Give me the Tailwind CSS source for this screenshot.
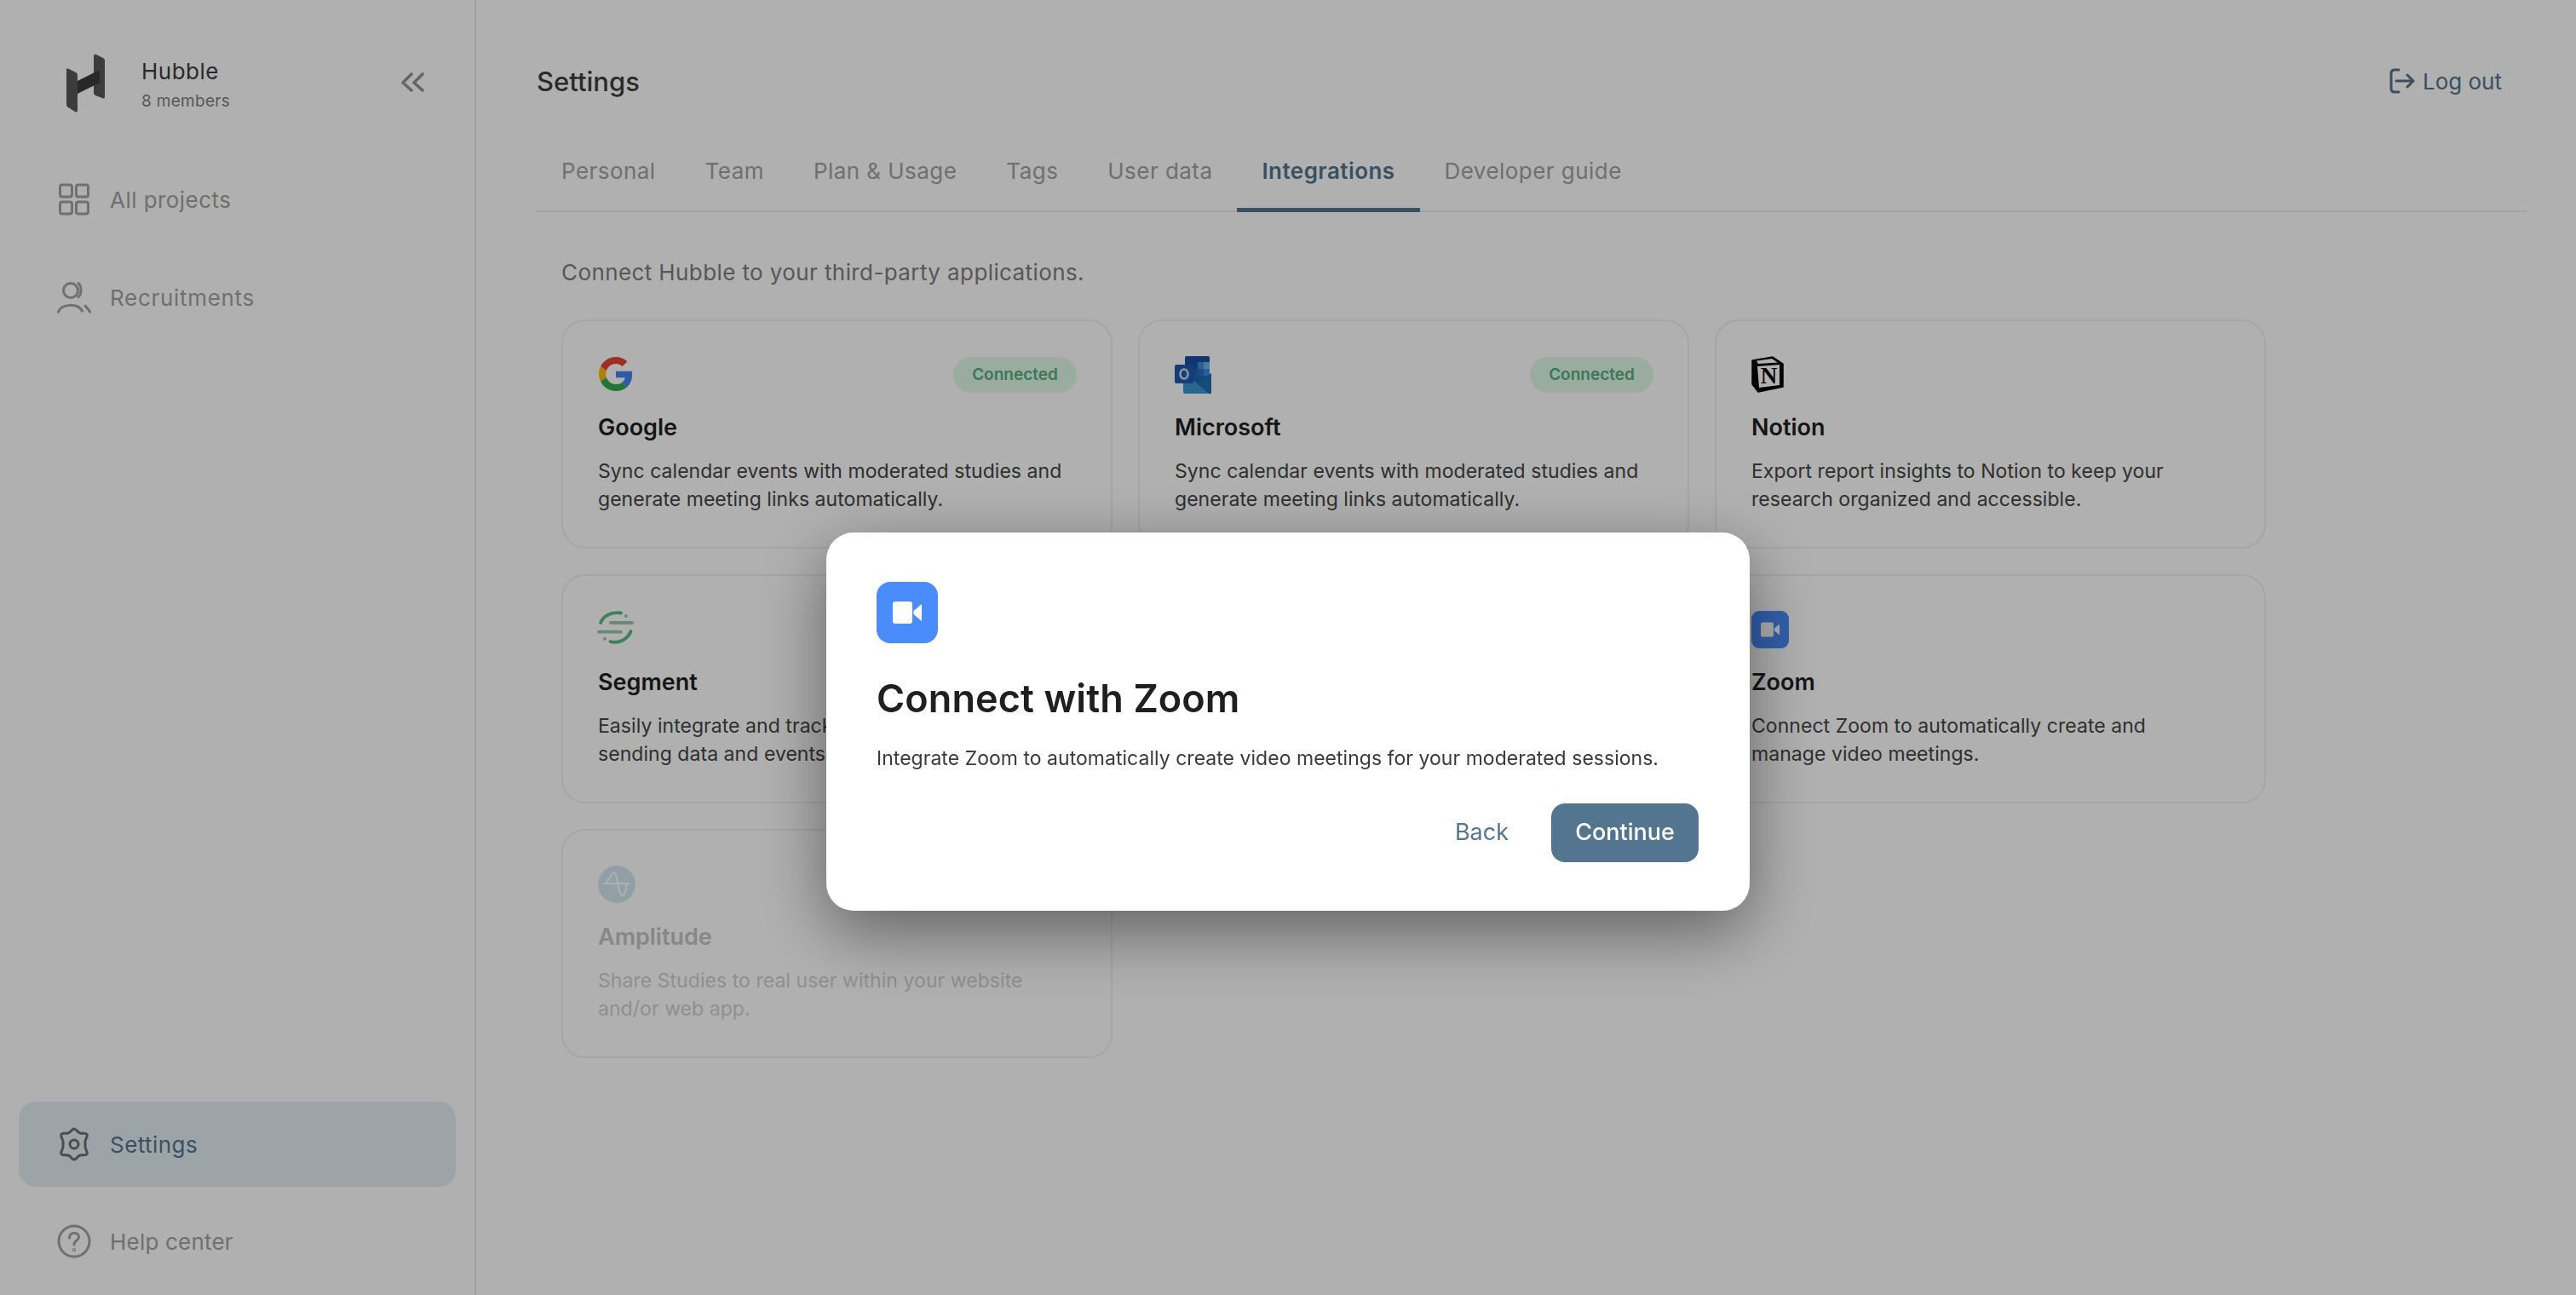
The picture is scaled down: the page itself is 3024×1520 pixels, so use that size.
<!DOCTYPE html>
<html lang="en">
<head>
  <meta charset="UTF-8" />
  <title>Hubble - Settings</title>
  <script src="https://cdn.jsdelivr.net/npm/@tailwindcss/browser@4"></script>
</head>
<body class="bg-white text-[#3f3f3f] h-screen overflow-hidden flex font-['Inter',sans-serif]">

  <!-- Sidebar -->
  <aside class="w-[559px] shrink-0 h-full border-r-2 border-[#e5e5e5] flex flex-col">
    <div class="flex items-center h-[195px] pl-[78px] pr-[59px]">
      <svg class="w-[45px] h-[69px] shrink-0" viewBox="78 63 45 69">
        <path fill="#585858" d="M78 82q0-3 3-1l8 4q2 1 2 3v41q0 4-3 2l-8-5q-2-1-2-3z" />
        <path fill="#585858" d="M110 66q0-3 3-2l8 4q2 1 2 3v43q0 3-3 1l-8-3q-2-1-2-3z" />
        <path fill="#3a3a3a" d="M91 95 117 82v15L91 110z" />
      </svg>
      <div class="ml-[43px] flex-1 pt-[3px]">
        <div class="text-[26px] leading-[34px] tracking-[0.5px] text-[#3d3d3d]">Hubble</div>
        <div class="text-[19px] leading-[26px] mt-[5px] tracking-[0.3px] text-[#7f7f7f]">8 members</div>
      </div>
      <svg class="w-[28px] h-[24px] mb-[2px]" viewBox="0 0 28 24" fill="none" stroke="#949494" stroke-width="3.6" stroke-linecap="round" stroke-linejoin="round">
        <path d="M13 2 3 12l10 9M26 2 16 12l10 9" />
      </svg>
    </div>

    <nav class="flex flex-col gap-[15px] px-[22px] mt-[-11px]">
      <a class="flex items-center gap-[22px] h-[100px] pl-[45px] text-[#a2a2a2] text-[26px] tracking-[0.45px]">
        <svg class="w-[40px] h-[40px] shrink-0" viewBox="0 0 40 40" fill="none" stroke="#a2a2a2" stroke-width="3">
          <rect x="3.5" y="3" width="14" height="14" rx="2.5" /><rect x="22.5" y="3" width="14" height="14" rx="2.5" />
          <rect x="3.5" y="23" width="14" height="14" rx="2.5" /><rect x="22.5" y="23" width="14" height="14" rx="2.5" />
        </svg>
        All projects
      </a>
      <a class="flex items-center gap-[22px] h-[100px] pl-[45px] text-[#a2a2a2] text-[26px] tracking-[0.7px]">
        <svg class="w-[40px] h-[40px] shrink-0" viewBox="0 0 40 40" fill="none" stroke="#a2a2a2" stroke-width="3" stroke-linecap="round">
          <circle cx="16" cy="12" r="8.5" />
          <path d="M25 3.5c4 3 4 13 0 16M1.5 37c4-10 23-10 28-1M33 30c2 2 4 4 5.5 7" />
        </svg>
        Recruitments
      </a>
    </nav>

    <div class="mt-auto flex flex-col gap-[14px] px-[22px] pb-[13px]">
      <a class="flex items-center gap-[22px] h-[100px] pl-[45px] rounded-[20px] bg-[#e2eef2] text-[#537590] text-[26px] tracking-[0.45px]">
        <svg class="w-[40px] h-[40px] shrink-0" viewBox="0 0 40 40" fill="none" stroke="#6e6e6e" stroke-width="3" stroke-linejoin="round">
          <path d="M20 2c3 0 3.5 4 7 5s6.500-1 8 1.500-2 5-2 8.500v6c0 3.500 3.500 6 2 8.500s-4.500.5-8 1.500-4 5-7 5-3.500-4-7-5-6.500 1-8-1.500 2-5 2-8.500v-6c0-3.500-3.500-6-2-8.500s4.500-.5 8-1.500 4-5 7-5z" />
          <circle cx="20" cy="20" r="5" />
        </svg>
        Settings
      </a>
      <a class="flex items-center gap-[22px] h-[100px] pl-[45px] text-[#a2a2a2] text-[26px] tracking-[0.2px]">
        <svg class="w-[40px] h-[40px] shrink-0" viewBox="0 0 40 40" fill="none" stroke="#a2a2a2" stroke-width="3" stroke-linecap="round">
          <circle cx="20" cy="20" r="18" />
          <path d="M14.500 16c0-8 11-7 11-1 0 4-5.500 4-5.500 9" />
          <circle cx="20" cy="30" r="0.6" />
        </svg>
        Help center
      </a>
    </div>
  </aside>

  <!-- Main -->
  <main class="flex-1 pl-[71px] pr-[58px]">
    <header class="flex items-center justify-between h-[192px]">
      <h1 class="text-[31px] font-medium text-[#3d3d3d]">Settings</h1>
      <a class="flex items-center gap-[9px] text-[26px] text-[#537590] mr-[29px] pb-[2px]">
        <svg class="w-[30px] h-[30px]" viewBox="0 0 30 30" fill="none" stroke="#537590" stroke-width="3" stroke-linecap="round" stroke-linejoin="round">
          <path d="M11 2H6Q2 2 2 6v18q0 4 4 4h5M8 15h20M21 8l7 7-7 7" />
        </svg>
        Log out
      </a>
    </header>

    <!-- Tabs -->
    <div class="flex h-[57px] border-b-2 border-[#eeeeee] text-[26px] text-[#a2a2a2] tracking-[0.45px]">
      <a class="px-[29px] leading-[17px] h-[57px]">Personal</a>
      <a class="px-[29px] leading-[17px] h-[57px]">Team</a>
      <a class="px-[29px] leading-[17px] h-[57px]">Plan &amp; Usage</a>
      <a class="px-[29px] leading-[17px] h-[57px]">Tags</a>
      <a class="px-[29px] leading-[17px] h-[57px]">User data</a>
      <a class="px-[29px] leading-[17px] h-[57px] font-semibold text-[#537590] border-b-[5px] border-[#537590]">Integrations</a>
      <a class="px-[29px] leading-[17px] h-[57px]">Developer guide</a>
    </div>

    <div class="pl-[29px] w-[2030px]">
      <p class="mt-[54px] text-[26px] leading-[34px] text-[#7e7e7e] tracking-[0.4px]">Connect Hubble to your third-party applications.</p>

      <div class="grid grid-cols-3 gap-[30px] mt-[38px]">

        <div class="h-[269px] rounded-[28px] border-2 border-[#f0f0f0] pl-[41px] pr-[40px] pt-[41px]">
          <div class="flex justify-between h-[44px]">
            <svg class="w-[40px] h-[42px] ml-[1px]" viewBox="0 0 48 48">
              <path fill="#EA4335" d="M24 9.500c3.540 0 6.710 1.220 9.210 3.600l6.850-6.850C35.900 2.380 30.470 0 24 0 14.620 0 6.510 5.380 2.560 13.220l7.980 6.190C12.430 13.720 17.740 9.500 24 9.500z" />
              <path fill="#4285F4" d="M46.980 24.550c0-1.570-.15-3.090-.38-4.550H24v9.020h12.940c-.58 2.960-2.260 5.480-4.780 7.180l7.730 6c4.510-4.180 7.090-10.360 7.090-17.650z" />
              <path fill="#FBBC05" d="M10.530 28.590c-.48-1.450-.76-2.990-.76-4.590s.27-3.140.76-4.590l-7.980-6.190C.92 16.460 0 20.120 0 24c0 3.880.92 7.540 2.560 10.780l7.970-6.190z" />
              <path fill="#34A853" d="M24 48c6.480 0 11.930-2.130 15.890-5.810l-7.730-6c-2.150 1.450-4.920 2.300-8.160 2.300-6.260 0-11.570-4.220-13.470-9.910l-7.980 6.190C6.510 42.620 14.620 48 24 48z" />
            </svg>
            <span class="h-[42px] w-[145px] mt-[1px] rounded-full bg-[#dff8e6] text-[#55ae7e] text-[19px] font-semibold flex items-center justify-center">Connected</span>
          </div>
          <h3 class="mt-[23px] text-[27px] leading-[34px] font-semibold text-[#1f1f1f]">Google</h3>
          <p class="mt-[18px] max-w-[550px] text-[23px] leading-[33px] text-[#454545] tracking-[0.05px]">Sync calendar events with moderated studies and generate meeting links automatically.</p>
        </div>

        <div class="h-[269px] rounded-[28px] border-2 border-[#f0f0f0] pl-[41px] pr-[40px] pt-[41px]">
          <div class="flex justify-between h-[44px]">
            <svg class="w-[44px] h-[44px]" viewBox="0 0 44 44">
              <path fill="#1a4fa8" d="M12 2q0-2 2-2h25q2 0 2 2v20H12z" />
              <path fill="#1e63b4" d="M12 15h29v18H12z" />
              <path fill="#3a8cd6" d="M27 7h14v8H27z" />
              <path fill="#62b8e0" d="M34 7h7v8h-7z" />
              <path fill="#2a6fc0" d="M27 15h7v8h-7z" />
              <path fill="#3a8cd6" d="M34 15h7v8h-7z" />
              <path fill="#3b95d2" d="M10 22l17 10 16-12v22q0 2-2 2H12q-2 0-2-2z" />
              <path fill="#1f6cb0" d="M43 20v24H40L26 32z" />
              <rect y="10" width="22" height="22" rx="2" fill="#2059ae" />
              <ellipse cx="11" cy="21" rx="4.500" ry="5.500" fill="none" stroke="#c9dcf0" stroke-width="2.600" />
            </svg>
            <span class="h-[42px] w-[145px] mt-[1px] rounded-full bg-[#dff8e6] text-[#55ae7e] text-[19px] font-semibold flex items-center justify-center">Connected</span>
          </div>
          <h3 class="mt-[23px] text-[27px] leading-[34px] font-semibold text-[#1f1f1f]">Microsoft</h3>
          <p class="mt-[18px] max-w-[550px] text-[23px] leading-[33px] text-[#454545] tracking-[0.05px]">Sync calendar events with moderated studies and generate meeting links automatically.</p>
        </div>

        <div class="h-[269px] rounded-[28px] border-2 border-[#f0f0f0] pl-[41px] pr-[40px] pt-[41px]">
          <div class="h-[44px]">
            <svg class="w-[40px] h-[44px]" viewBox="0 0 40 44">
              <path fill="#000000" stroke="#000000" stroke-width="1.500" stroke-linejoin="round" d="M1 5 25 1l12 8v27L8 42 1 33z" />
              <path fill="#ffffff" d="M6 5.500 24 3l7 4.500L8 9z" />
              <path fill="#ffffff" d="M7 12 33 10v24L9 37z" />
              <text x="20.500" y="32" text-anchor="middle" font-family="Liberation Serif, serif" font-weight="700" font-size="27" fill="#000000">N</text>
            </svg>
          </div>
          <h3 class="mt-[23px] text-[27px] leading-[34px] font-semibold text-[#1f1f1f]">Notion</h3>
          <p class="mt-[18px] max-w-[550px] text-[23px] leading-[33px] text-[#454545] tracking-[0.05px]">Export report insights to Notion to keep your research organized and accessible.</p>
        </div>

        <div class="h-[269px] rounded-[28px] border-2 border-[#f0f0f0] pl-[41px] pr-[40px] pt-[41px]">
          <div class="h-[44px]">
            <svg class="w-[44px] h-[44px] overflow-visible" viewBox="13 14 44 44" fill="none" stroke-linecap="round" stroke-width="3.800">
              <path stroke="#59ba81" d="M16 28C19 20 28 15 40 16.500M27.500 50C38 53 48 47 51.500 38" />
              <path stroke="#98c8a8" d="M28 28h25M14 38.700h26" />
              <circle cx="45.700" cy="20" r="2" fill="#98c8a8" stroke="none" />
              <circle cx="21" cy="46.700" r="2" fill="#98c8a8" stroke="none" />
            </svg>
          </div>
          <h3 class="mt-[23px] text-[27px] leading-[34px] font-semibold text-[#1f1f1f]">Segment</h3>
          <p class="mt-[18px] max-w-[550px] text-[23px] leading-[33px] text-[#454545] tracking-[0.05px]">Easily integrate and track user behavior by sending data and events to Segment.</p>
        </div>

        <div class="h-[269px] rounded-[28px] border-2 border-[#f0f0f0]"></div>

        <div class="h-[269px] rounded-[28px] border-2 border-[#f0f0f0] pl-[41px] pr-[40px] pt-[41px]">
          <div class="h-[44px]">
            <div class="w-[44px] h-[44px] rounded-[9px] bg-[#4a8cfb] flex items-center justify-center">
              <svg class="w-[22px] h-[18px]" viewBox="0 0 34 26" fill="#ffffff"><path d="M0 3q0-3 3-3h17q3 0 3 3v20q0 3-3 3H3q-3 0-3-3zM24.500 11 34 3v20l-9.500-8z" /></svg>
            </div>
          </div>
          <h3 class="mt-[23px] text-[27px] leading-[34px] font-semibold text-[#1f1f1f]">Zoom</h3>
          <p class="mt-[18px] max-w-[550px] text-[23px] leading-[33px] text-[#454545] tracking-[0.05px]">Connect Zoom to automatically create and manage video meetings.</p>
        </div>

        <div class="h-[269px] rounded-[28px] border-2 border-[#f0f0f0] pl-[41px] pr-[40px] pt-[41px]">
          <div class="h-[44px]">
            <svg class="w-[44px] h-[44px]" viewBox="0 0 44 44" fill="none">
              <circle cx="22" cy="22" r="22" fill="#d3e6f1" />
              <path stroke="#ffffff" stroke-width="2" stroke-linecap="round" d="M7 21h30M8 21C12 20 16 8 19 8c4 0 4 27 10 27 3 0 4-8 5-14" />
            </svg>
          </div>
          <h3 class="mt-[23px] text-[27px] leading-[34px] font-semibold text-[#c4c4c4]">Amplitude</h3>
          <p class="mt-[18px] max-w-[550px] text-[23px] leading-[33px] text-[#d0d0d0] tracking-[0.05px]">Share Studies to real user within your website and/or web app.</p>
        </div>

      </div>
    </div>
  </main>

  <!-- Modal -->
  <div class="fixed inset-0 bg-black/31"></div>
  <div class="fixed left-[970px] top-[625px] w-[1084px] h-[444px] bg-white rounded-[32px] shadow-[0_24px_80px_rgba(0,0,0,0.45)] px-[59px] pt-[58px] text-[#1f1f1f]">
    <div class="w-[72px] h-[72px] rounded-[16px] bg-[#4a8cfb] flex items-center justify-center">
      <svg class="w-[34px] h-[26px]" viewBox="0 0 34 26" fill="#ffffff"><path d="M0 3q0-3 3-3h17q3 0 3 3v20q0 3-3 3H3q-3 0-3-3zM24.500 11 34 3v20l-9.500-8z" /></svg>
    </div>
    <h2 class="mt-[35px] text-[45px] leading-[60px] font-semibold tracking-[0.1px]">Connect with Zoom</h2>
    <p class="mt-[23px] text-[23px] leading-[34px] text-[#3a3a3a] tracking-[0.03px]">Integrate Zoom to automatically create video meetings for your moderated sessions.</p>
    <div class="flex justify-end items-center gap-[50px] mt-[36px] mr-[1px]">
      <button class="text-[27px] text-[#537590]">Back</button>
      <button class="w-[173px] h-[69px] rounded-[16px] bg-[#537590] text-white text-[27px] font-medium">Continue</button>
    </div>
  </div>

</body>
</html>
